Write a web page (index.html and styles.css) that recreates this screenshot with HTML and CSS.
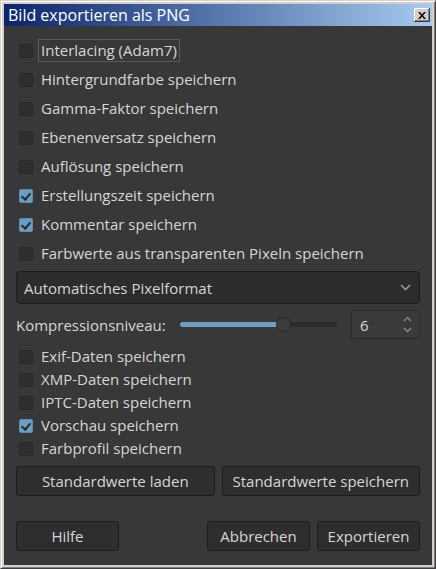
FILE: index.html
```html
<!DOCTYPE html>
<html lang="de">
<head>
  <meta charset="UTF-8">
  <meta name="viewport" content="width=device-width, initial-scale=1.0">
  <title>Bild exportieren als PNG</title>
  <link rel="stylesheet" href="styles.css">
</head>
<body>
  <div class="window">
    <div class="titlebar">
      <span class="title">Bild exportieren als PNG</span>
      <button class="close" aria-label="Schließen">
        <svg width="8" height="7" viewBox="0 0 8 7">
          <path d="M0 0h2l2 2.5L6 0h2L5 3.5 8 7H6L4 4.5 2 7H0l3-3.5z" fill="#000"/>
        </svg>
      </button>
    </div>

    <div class="content">
      <!-- Optionen für die PNG-Datei -->
      <ul class="options">
        <li><span class="box"></span><span class="label focus">Interlacing (Adam7)</span></li>
        <li><span class="box"></span><span class="label">Hintergrundfarbe speichern</span></li>
        <li><span class="box"></span><span class="label">Gamma-Faktor speichern</span></li>
        <li><span class="box"></span><span class="label">Ebenenversatz speichern</span></li>
        <li><span class="box"></span><span class="label">Auflösung speichern</span></li>
        <li><span class="box checked"></span><span class="label">Erstellungszeit speichern</span></li>
        <li><span class="box checked"></span><span class="label">Kommentar speichern</span></li>
        <li><span class="box"></span><span class="label">Farbwerte aus transparenten Pixeln speichern</span></li>
      </ul>

      <div class="select">
        <span>Automatisches Pixelformat</span>
        <svg class="chevron" width="11" height="7" viewBox="0 0 11 7">
          <path d="M1 1l4.5 4.5L10 1" fill="none" stroke="#9a9a9a" stroke-width="1.6"/>
        </svg>
      </div>

      <div class="compression">
        <span class="compression-label">Kompressionsniveau:</span>
        <div class="slider">
          <div class="slider-fill" style="width: 66%"></div>
          <div class="slider-handle" style="left: 66%"></div>
        </div>
        <div class="spin">
          <span>6</span>
          <div class="spin-arrows">
            <svg width="9" height="6" viewBox="0 0 9 6"><path d="M1 5l3.5-3.5L8 5" fill="none" stroke="#8a8a8a" stroke-width="1.3"/></svg>
            <svg width="9" height="6" viewBox="0 0 9 6"><path d="M1 1l3.5 3.5L8 1" fill="none" stroke="#8a8a8a" stroke-width="1.3"/></svg>
          </div>
        </div>
      </div>

      <!-- Metadaten -->
      <ul class="options compact">
        <li><span class="box"></span><span class="label">Exif-Daten speichern</span></li>
        <li><span class="box"></span><span class="label">XMP-Daten speichern</span></li>
        <li><span class="box"></span><span class="label">IPTC-Daten speichern</span></li>
        <li><span class="box checked"></span><span class="label">Vorschau speichern</span></li>
        <li><span class="box"></span><span class="label">Farbprofil speichern</span></li>
      </ul>

      <div class="defaults">
        <button class="btn">Standardwerte laden</button>
        <button class="btn">Standardwerte speichern</button>
      </div>

      <div class="actions">
        <button class="btn small">Hilfe</button>
        <div class="actions-right">
          <button class="btn small">Abbrechen</button>
          <button class="btn small">Exportieren</button>
        </div>
      </div>
    </div>
  </div>
</body>
</html>
```

FILE: styles.css
```css
* {
  box-sizing: border-box;
  margin: 0;
  padding: 0;
}

body {
  font-family: "Open Sans", "Noto Sans", sans-serif;
  font-size: 15px;
  color: #d6d6d6;
  background-color: #383838;
}

/* Fensterrahmen im klassischen Stil */
.window {
  width: 436px;
  height: 569px;
  display: flex;
  flex-direction: column;
  background-color: #d4d0c8;
  border: 1px solid;
  border-color: #d4d0c8 #404040 #404040 #d4d0c8;
  box-shadow: inset 1px 1px 0 #fff, inset -1px -1px 0 #808080;
  padding: 3px;
}

.titlebar {
  height: 22px;
  display: flex;
  align-items: center;
  justify-content: space-between;
  padding: 0 2px 0 4px;
  background: linear-gradient(to right, #0a246a, #a6caf0);
  color: #fff;
}

.title {
  font-size: 16px;
  line-height: 22px;
}

.close {
  width: 16px;
  height: 14px;
  display: flex;
  align-items: center;
  justify-content: center;
  background-color: #d4d0c8;
  border: none;
  box-shadow: inset -1px -1px 0 #404040, inset 1px 1px 0 #fff, inset -2px -2px 0 #808080;
}

.content {
  flex: 1;
  display: flex;
  flex-direction: column;
  background-color: #383838;
  padding: 10px 12px 12px 12px;
}

.options {
  list-style: none;
}

.options li {
  height: 29px;
  display: flex;
  align-items: center;
}

.options.compact {
  margin-top: 6px;
}

.options.compact li {
  height: 23px;
}

.box {
  width: 14px;
  height: 14px;
  margin-left: 3px;
  margin-right: 5px;
  border: 1px solid #292929;
  border-radius: 2px;
  background-color: #2e2e2e;
  position: relative;
}

.box.checked {
  background-color: #6a9ec2;
  border-color: #5d8cad;
}

/* Haken im markierten Kästchen */
.box.checked::after {
  content: "";
  position: absolute;
  left: 3px;
  top: 1px;
  width: 4px;
  height: 7px;
  border: solid #2a2a2a;
  border-width: 0 2px 2px 0;
  transform: rotate(40deg);
}

.label {
  padding: 0 2px;
  border: 1px solid transparent;
  line-height: 21px;
}

.label.focus {
  border-color: #5a5a5a;
}

.select {
  margin-top: 3px;
  height: 33px;
  display: flex;
  align-items: center;
  justify-content: space-between;
  padding: 0 8px 0 7px;
  background-color: #2c2c2c;
  border: 1px solid #1c1c1c;
  border-radius: 4px;
}

.compression {
  margin-top: 6px;
  height: 29px;
  display: flex;
  align-items: center;
}

.compression-label {
  width: 164px;
}

.slider {
  position: relative;
  width: 157px;
  height: 5px;
  border-radius: 3px;
  background-color: #2b2b2b;
}

.slider-fill {
  height: 100%;
  border-radius: 3px;
  background-color: #6a9ec2;
}

.slider-handle {
  position: absolute;
  top: 50%;
  width: 15px;
  height: 15px;
  margin: -7.5px 0 0 -7.5px;
  border-radius: 50%;
  background-color: #3c3c3c;
  border: 1px solid #262626;
}

.spin {
  margin-left: auto;
  width: 69px;
  height: 29px;
  display: flex;
  align-items: center;
  justify-content: space-between;
  padding: 0 7px 0 8px;
  background-color: #3a3a3a;
  border: 1px solid #2a2a2a;
  border-radius: 3px;
}

.spin-arrows {
  display: flex;
  flex-direction: column;
  gap: 5px;
}

.spin-arrows svg {
  display: block;
}

.btn {
  font-family: inherit;
  font-size: 15px;
  color: #d6d6d6;
  height: 30px;
  background-color: #2e2e2e;
  border: 1px solid #1c1c1c;
  border-radius: 3px;
}

.defaults {
  margin-top: 6px;
  display: flex;
  gap: 7px;
}

.defaults .btn {
  flex: 1;
}

.actions {
  margin-top: 25px;
  display: flex;
  justify-content: space-between;
}

.actions-right {
  display: flex;
  gap: 7px;
}

.btn.small {
  width: 103px;
}
```
